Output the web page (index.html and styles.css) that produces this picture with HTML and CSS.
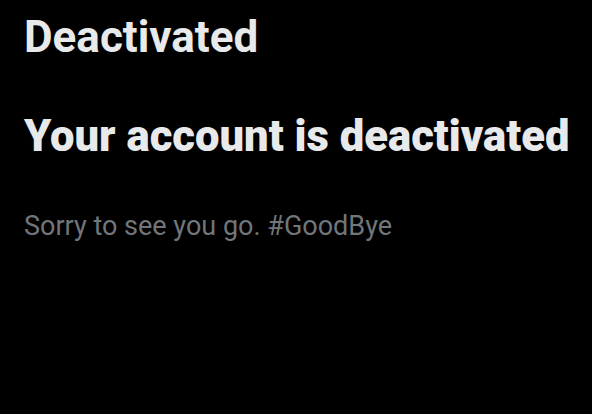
FILE: index.html
```html
<!DOCTYPE html>
<html lang="en">
<head>
    <meta charset="UTF-8">
    <meta name="viewport" content="width=device-width, initial-scale=1.0">
    <title>Deactivated</title>
    <link rel="stylesheet" href="styles.css">
</head>
<body>
    <div class="page">
        <h1 class="page-title">Deactivated</h1>
        <div class="notice">
            <h2>Your account is deactivated</h2>
            <p>Sorry to see you go. #GoodBye</p>
        </div>
    </div>
</body>
</html>
```

FILE: styles.css
```css
body {
    margin: 0;
    background-color: #000;
    font-family: Roboto, "Noto Sans", sans-serif;
    color: #e7e9ea;
}

.page {
    padding: 0 24px;
}

.page-title {
    margin: 0;
    padding-top: 12px;
    font-size: 44px;
    font-weight: 700;
    line-height: 50px;
}

.notice h2 {
    margin: 50px 0 0;
    font-size: 43.6px;
    font-weight: 900;
    line-height: 50px;
    white-space: nowrap;
}

.notice p {
    margin: 48px 0 0;
    font-size: 27px;
    line-height: 32px;
    color: #71767b;
}
```
